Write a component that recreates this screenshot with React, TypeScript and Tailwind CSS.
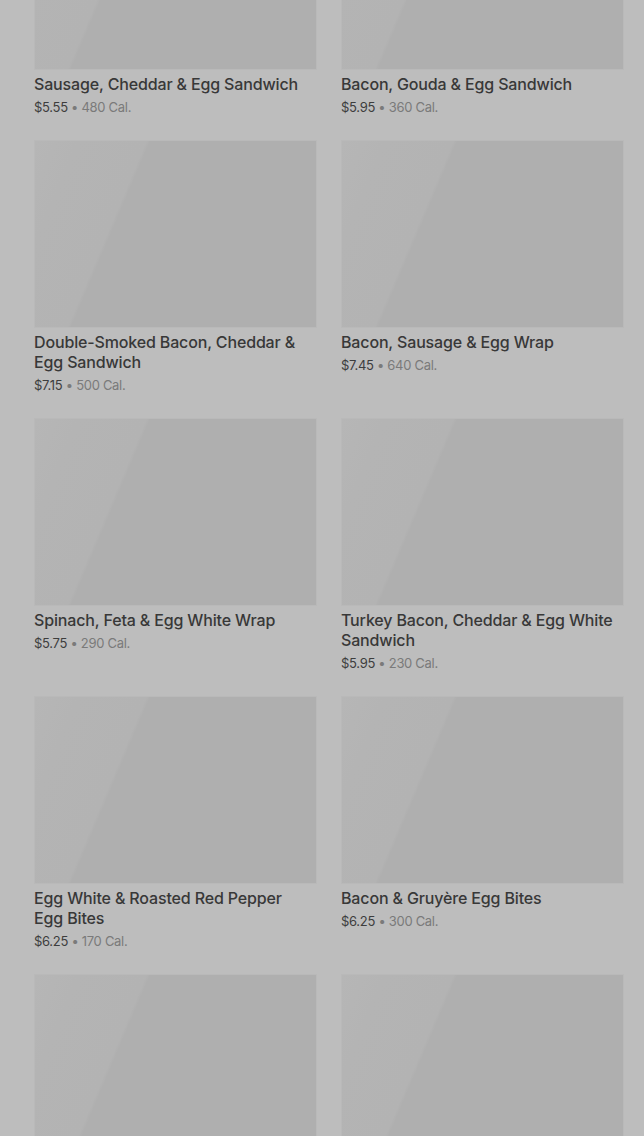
import * as React from "react"

type Item = { name: string; price: string; cal: string }

const items: Item[] = [
  { name: "Sausage, Cheddar & Egg Sandwich", price: "$5.55", cal: "480 Cal." },
  { name: "Bacon, Gouda & Egg Sandwich", price: "$5.95", cal: "360 Cal." },
  { name: "Double-Smoked Bacon, Cheddar & Egg Sandwich", price: "$7.15", cal: "500 Cal." },
  { name: "Bacon, Sausage & Egg Wrap", price: "$7.45", cal: "640 Cal." },
  { name: "Spinach, Feta & Egg White Wrap", price: "$5.75", cal: "290 Cal." },
  { name: "Turkey Bacon, Cheddar & Egg White Sandwich", price: "$5.95", cal: "230 Cal." },
  { name: "Egg White & Roasted Red Pepper Egg Bites", price: "$6.25", cal: "170 Cal." },
  { name: "Bacon & Gruyère Egg Bites", price: "$6.25", cal: "300 Cal." },
  { name: "", price: "", cal: "" },
  { name: "", price: "", cal: "" },
]

function Card({ item }: { item: Item }) {
  return (
    <div className="flex flex-col">
      <div className="h-[188px] border border-[#b9b9b9] bg-[linear-gradient(113deg,#b6b6b6_0%,#b4b4b4_12%,#b3b3b3_31%,#afafaf_32%,#afafaf_100%)]" />
      {item.name && (
        <>
          <p className="mt-[4px] pr-1 text-[16px] leading-[20px] font-medium tracking-[-0.15px] text-[#383838]">
            {item.name}
          </p>
          <p className="mt-[3px] text-[13px] leading-[20px] tracking-[-0.3px] text-[#3d3d3d]">
            {item.price}
            <span className="text-[#7a7a7a]"> • {item.cal}</span>
          </p>
        </>
      )}
    </div>
  )
}

export default function App() {
  return (
    <div className="min-h-screen overflow-hidden bg-[#bdbdbd] font-['Inter',sans-serif]">
      <div className="-mt-[118px] grid grid-cols-2 gap-x-6 gap-y-[23px] pl-[34px] pr-5">
        {items.map((item, i) => (
          <Card key={i} item={item} />
        ))}
      </div>
    </div>
  )
}
